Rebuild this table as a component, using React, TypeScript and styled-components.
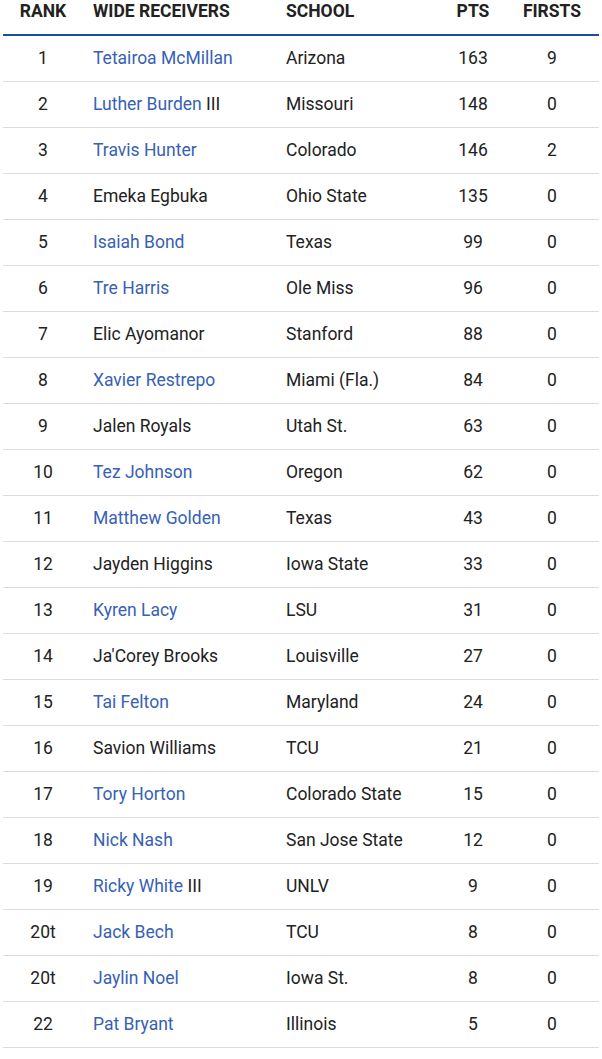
import React from 'react';
import styled, { createGlobalStyle } from 'styled-components';

type Player = {
    rank: string;
    name: string;
    suffix?: string;
    link: boolean;
    school: string;
    pts: number;
    firsts: number;
};

const players: Player[] = [
    { rank: '1', name: 'Tetairoa McMillan', link: true, school: 'Arizona', pts: 163, firsts: 9 },
    { rank: '2', name: 'Luther Burden', suffix: 'III', link: true, school: 'Missouri', pts: 148, firsts: 0 },
    { rank: '3', name: 'Travis Hunter', link: true, school: 'Colorado', pts: 146, firsts: 2 },
    { rank: '4', name: 'Emeka Egbuka', link: false, school: 'Ohio State', pts: 135, firsts: 0 },
    { rank: '5', name: 'Isaiah Bond', link: true, school: 'Texas', pts: 99, firsts: 0 },
    { rank: '6', name: 'Tre Harris', link: true, school: 'Ole Miss', pts: 96, firsts: 0 },
    { rank: '7', name: 'Elic Ayomanor', link: false, school: 'Stanford', pts: 88, firsts: 0 },
    { rank: '8', name: 'Xavier Restrepo', link: true, school: 'Miami (Fla.)', pts: 84, firsts: 0 },
    { rank: '9', name: 'Jalen Royals', link: false, school: 'Utah St.', pts: 63, firsts: 0 },
    { rank: '10', name: 'Tez Johnson', link: true, school: 'Oregon', pts: 62, firsts: 0 },
    { rank: '11', name: 'Matthew Golden', link: true, school: 'Texas', pts: 43, firsts: 0 },
    { rank: '12', name: 'Jayden Higgins', link: false, school: 'Iowa State', pts: 33, firsts: 0 },
    { rank: '13', name: 'Kyren Lacy', link: true, school: 'LSU', pts: 31, firsts: 0 },
    { rank: '14', name: "Ja'Corey Brooks", link: false, school: 'Louisville', pts: 27, firsts: 0 },
    { rank: '15', name: 'Tai Felton', link: true, school: 'Maryland', pts: 24, firsts: 0 },
    { rank: '16', name: 'Savion Williams', link: false, school: 'TCU', pts: 21, firsts: 0 },
    { rank: '17', name: 'Tory Horton', link: true, school: 'Colorado State', pts: 15, firsts: 0 },
    { rank: '18', name: 'Nick Nash', link: true, school: 'San Jose State', pts: 12, firsts: 0 },
    { rank: '19', name: 'Ricky White', suffix: 'III', link: true, school: 'UNLV', pts: 9, firsts: 0 },
    { rank: '20t', name: 'Jack Bech', link: true, school: 'TCU', pts: 8, firsts: 0 },
    { rank: '20t', name: 'Jaylin Noel', link: true, school: 'Iowa St.', pts: 8, firsts: 0 },
    { rank: '22', name: 'Pat Bryant', link: true, school: 'Illinois', pts: 5, firsts: 0 },
];

function App() {
    return (
        <>
            <GlobalStyle />
            <Wrapper>
                <Table>
                    <colgroup>
                        <col style={{ width: 80 }} />
                        <col style={{ width: 193 }} />
                        <col style={{ width: 165 }} />
                        <col style={{ width: 64 }} />
                        <col style={{ width: 94 }} />
                    </colgroup>
                    <thead>
                        <tr>
                            <Th $center>Rank</Th>
                            <Th>Wide Receivers</Th>
                            <Th>School</Th>
                            <Th $center>Pts</Th>
                            <Th $center>Firsts</Th>
                        </tr>
                    </thead>
                    <tbody>
                        {players.map((p, i) => (
                            <Row key={i}>
                                <Td $center>{p.rank}</Td>
                                <Td>
                                    {p.link ? <PlayerLink href="#">{p.name}</PlayerLink> : p.name}
                                    {p.suffix ? ` ${p.suffix}` : ''}
                                </Td>
                                <Td>{p.school}</Td>
                                <Td $center>{p.pts}</Td>
                                <Td $center>{p.firsts}</Td>
                            </Row>
                        ))}
                    </tbody>
                </Table>
            </Wrapper>
        </>
    );
}

const GlobalStyle = createGlobalStyle`
    body {
        margin: 0;
        background: #fff;
        font-family: Roboto, "Liberation Sans", Arial, sans-serif;
        color: #222;
    }
`;

const Wrapper = styled.div`
    width: 596px;
    padding: 0 3px;
`;

const Table = styled.table`
    width: 596px;
    border-collapse: collapse;
    table-layout: fixed;
    font-size: 17.5px;
`;

const Th = styled.th<{ $center?: boolean }>`
    height: 35px;
    padding: 0 0 0 ${(p) => (p.$center ? '0' : '10px')};
    vertical-align: top;
    line-height: 23px;
    text-align: ${(p) => (p.$center ? 'center' : 'left')};
    text-transform: uppercase;
    font-weight: 700;
    color: #222;
    border-bottom: 2px solid #1a4f9c;
    box-sizing: border-box;
`;

const Row = styled.tr`
    border-bottom: 1px solid #dcdcdc;
`;

const Td = styled.td<{ $center?: boolean }>`
    height: 46px;
    padding: 0 0 1px ${(p) => (p.$center ? '0' : '10px')};
    line-height: 20px;
    text-align: ${(p) => (p.$center ? 'center' : 'left')};
    vertical-align: middle;
    color: #222;
    white-space: nowrap;
    box-sizing: border-box;
`;

const PlayerLink = styled.a`
    color: #3761b5;
    text-decoration: none;
`;

export default App;
